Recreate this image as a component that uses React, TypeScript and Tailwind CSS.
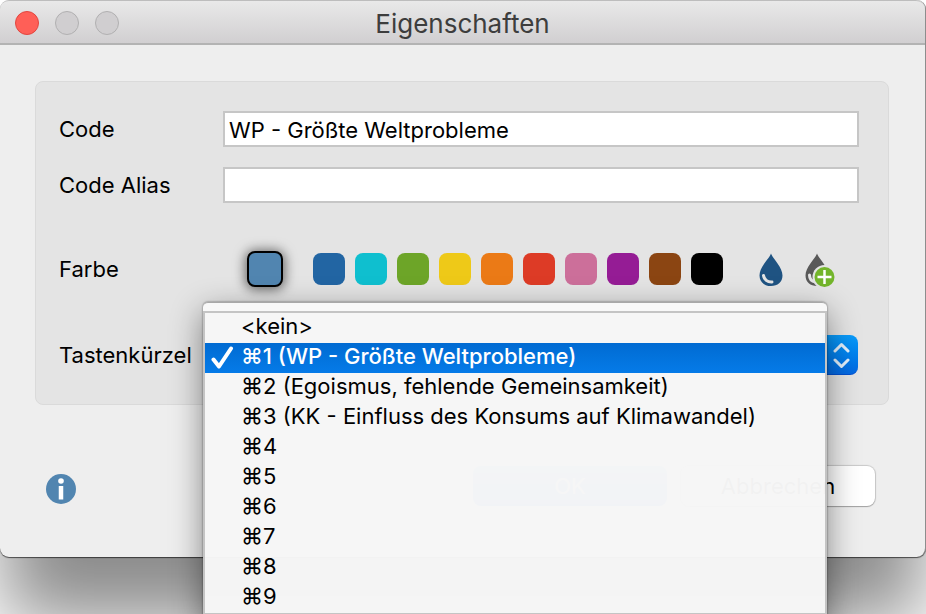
import { useState } from "react";

const swatches = [
  { name: "Blau", value: "#2265a3" },
  { name: "Türkis", value: "#0fbfcf" },
  { name: "Grün", value: "#6da528" },
  { name: "Gelb", value: "#eec918" },
  { name: "Orange", value: "#eb7a16" },
  { name: "Rot", value: "#dd3b26" },
  { name: "Rosa", value: "#cc6f9a" },
  { name: "Violett", value: "#951c95" },
  { name: "Braun", value: "#8b4512" },
  { name: "Schwarz", value: "#000000" },
];

const shortcuts = [
  "<kein>",
  "⌘1 (WP - Größte Weltprobleme)",
  "⌘2 (Egoismus, fehlende Gemeinsamkeit)",
  "⌘3 (KK - Einfluss des Konsums auf Klimawandel)",
  "⌘4",
  "⌘5",
  "⌘6",
  "⌘7",
  "⌘8",
  "⌘9",
];

function TitleBar() {
  return (
    <header className="relative flex h-[45px] items-center justify-center rounded-t-[9px] border-t border-b-2 border-t-[#bdbdbd] border-b-[#b3b3b3] bg-linear-to-b from-[#e9e9e9] to-[#d1cfd1] pt-1">
      <div className="absolute top-2.5 left-[15px] flex gap-4">
        <button aria-label="Schließen" className="size-6 rounded-full border border-[#e2463f] bg-[#ff5f57]" />
        <button aria-label="Minimieren" className="size-6 rounded-full border border-[#b1b0b1] bg-[#d0ced0]" />
        <button aria-label="Zoomen" className="size-6 rounded-full border border-[#b1b0b1] bg-[#d0ced0]" />
      </div>
      <h1 className="text-[26px] leading-8 text-[#3d3d3d]">Eigenschaften</h1>
    </header>
  );
}

function TextRow({ id, label, initial }: { id: string; label: string; initial: string }) {
  const [value, setValue] = useState(initial);
  return (
    <div className="flex h-9 items-center">
      <label htmlFor={id} className="w-[164px] shrink-0">
        {label}
      </label>
      <input
        id={id}
        type="text"
        value={value}
        onChange={(e) => setValue(e.target.value)}
        className="h-9 min-w-0 flex-1 border-2 border-[#c6c6c6] bg-white px-1 pt-0.5 outline-none"
      />
    </div>
  );
}

function ColorRow() {
  return (
    <div role="radiogroup" aria-labelledby="color-label" className="flex h-9 items-center">
      <span id="color-label" className="w-[164px] shrink-0">
        Farbe
      </span>
      <input
        type="radio"
        name="color"
        aria-label="Aktuelle Farbe"
        defaultChecked
        className="ml-6 size-9 shrink-0 appearance-none rounded-lg border-2 border-black bg-[#5185b0] shadow-[0_1px_12px_2px_rgba(0,0,0,0.55)]"
      />
      <div className="ml-[30px] flex gap-2.5">
        {swatches.map((s) => (
          <input
            key={s.name}
            type="radio"
            name="color"
            aria-label={s.name}
            className="size-8 shrink-0 appearance-none rounded-lg"
            style={{ backgroundColor: s.value }}
          />
        ))}
      </div>
      <button type="button" aria-label="Farbe wählen" className="ml-9 shrink-0">
        <svg width="24" height="36" viewBox="0 0 24 36">
          <path d="M12 2.5C14 8 23.500 16 23.500 24.500C23.500 31 18.500 35 12 35S.5 31 .5 24.500C.5 16 10 8 12 2.500Z" fill="#1f5382" />
          <path d="M4.500 24.500C5 28.500 8.500 31.300 13 31" fill="none" stroke="#e4e4e4" strokeWidth="3" strokeLinecap="round" />
        </svg>
      </button>
      <button type="button" aria-label="Farbe hinzufügen" className="ml-[22px] shrink-0">
        <svg width="32" height="36" viewBox="0 0 32 36">
          <path d="M12 2.500C14 8 23.500 16 23.500 24.500C23.500 31 18.500 35 12 35S.5 31 .5 24.500C.5 16 10 8 12 2.500Z" fill="#595959" />
          <path d="M4.500 24C4.500 28 7 30.500 10.500 31" fill="none" stroke="#e4e4e4" strokeWidth="3" strokeLinecap="round" />
          <circle cx="19.500" cy="26" r="12" fill="#e4e4e4" />
          <circle cx="19.500" cy="26" r="10" fill="#73b52b" />
          <path d="M19.500 19v14M12.500 26h14" stroke="#fff" strokeWidth="2.500" />
        </svg>
      </button>
    </div>
  );
}

function ShortcutMenu({ selected, onSelect }: { selected: number; onSelect: (i: number) => void }) {
  return (
    <div className="absolute -top-[33px] right-8 -left-5 z-10 rounded-t-[5px] border-t border-t-[#a8a8a8] bg-[#fafafa]/90 pt-2 pb-2 shadow-[0_0_2px_rgba(0,0,0,0.6),0_10px_32px_rgba(0,0,0,0.45)]">
      <ul role="listbox" aria-label="Tastenkürzel" className="border-2 border-[#c4c4c4] bg-[#f5f5f5]/80">
        {shortcuts.map((text, i) => (
          <li
            key={text}
            role="option"
            aria-selected={i === selected}
            onClick={() => onSelect(i)}
            className={
              i === selected
                ? "flex h-[30px] items-center bg-linear-to-b from-[#016bd2] to-[#057be8] font-medium text-white"
                : "flex h-[30px] items-center text-black"
            }
          >
            <span className="flex w-9 shrink-0 pl-1.5">
              {i === selected && (
                <svg width="24" height="24" viewBox="0 0 24 24" fill="none" stroke="#fff" strokeWidth="4" strokeLinecap="round" strokeLinejoin="round">
                  <path d="M2.500 13.500L8 20.500L20 2.500" />
                </svg>
              )}
            </span>
            <span className="pb-1 whitespace-nowrap">{text}</span>
          </li>
        ))}
      </ul>
    </div>
  );
}

function ShortcutRow() {
  const [selected, setSelected] = useState(1);
  return (
    <div className="flex h-10 items-center">
      <label htmlFor="shortcut" className="w-[164px] shrink-0">
        Tastenkürzel
      </label>
      <div className="relative flex h-10 min-w-0 flex-1 pr-px">
        <select
          id="shortcut"
          value={selected}
          onChange={(e) => setSelected(Number(e.target.value))}
          className="h-10 min-w-0 flex-1 appearance-none rounded-l-lg bg-white pl-4 outline-none"
        >
          {shortcuts.map((text, i) => (
            <option key={text} value={i}>
              {text}
            </option>
          ))}
        </select>
        <span className="pointer-events-none flex w-9 shrink-0 items-center justify-end rounded-r-lg border-b border-b-[#0050d0] bg-linear-to-b from-[#0a9bfa] to-[#0468e2] pr-2">
          <svg width="18" height="26" viewBox="0 0 18 26" fill="none" stroke="#e3f1fd" strokeWidth="3" strokeLinecap="round" strokeLinejoin="round">
            <path d="M3 9L9.500 2.500L16 9M3 18L9.500 24.500L16 18" />
          </svg>
        </span>
        <ShortcutMenu selected={selected} onSelect={setSelected} />
      </div>
    </div>
  );
}

export default function App() {
  return (
    <div className="h-screen overflow-hidden bg-white font-[Inter,'Liberation_Sans','DejaVu_Sans',sans-serif] text-[22px] leading-7 text-black">
      <main className="rounded-[9px] border-r border-r-[#8d8d8d] bg-[#eeeeee] shadow-[0_1px_1px_rgba(0,0,0,0.6),0_68px_76px_-4px_rgba(0,0,0,0.46)]">
        <TitleBar />
        <form onSubmit={(e) => e.preventDefault()} className="pt-9 pr-9 pb-[51px] pl-[35px]">
          <section className="flex flex-col gap-12 rounded-lg border border-[#dadada] bg-[#e4e4e4] pt-[29px] pr-[29px] pb-[29px] pl-[23px]">
            <div className="flex flex-col gap-5">
              <TextRow id="code" label="Code" initial="WP - Größte Weltprobleme" />
              <TextRow id="alias" label="Code Alias" initial="" />
            </div>
            <ColorRow />
            <ShortcutRow />
          </section>
          <footer className="mt-[61px] flex items-end justify-between pr-3.5 pl-2.5">
            <button type="button" aria-label="Hilfe">
              <svg width="32" height="32" viewBox="0 0 32 32">
                <circle cx="16" cy="15" r="15" fill="#5185b0" />
                <circle cx="16" cy="7" r="2.800" fill="#fff" />
                <path d="M16 12v13.500" stroke="#fff" strokeWidth="4.500" />
              </svg>
            </button>
            <div className="flex gap-3.5">
              <button type="submit" className="h-10 w-[194px] rounded-lg bg-linear-to-b from-[#6cb3fa] to-[#0a6bf0] text-white">
                OK
              </button>
              <button type="button" className="h-10 w-[194px] rounded-lg bg-white shadow-[0_0_1px_1px_rgba(0,0,0,0.16),0_1px_1px_rgba(0,0,0,0.2)]">
                Abbrechen
              </button>
            </div>
          </footer>
        </form>
      </main>
    </div>
  );
}
